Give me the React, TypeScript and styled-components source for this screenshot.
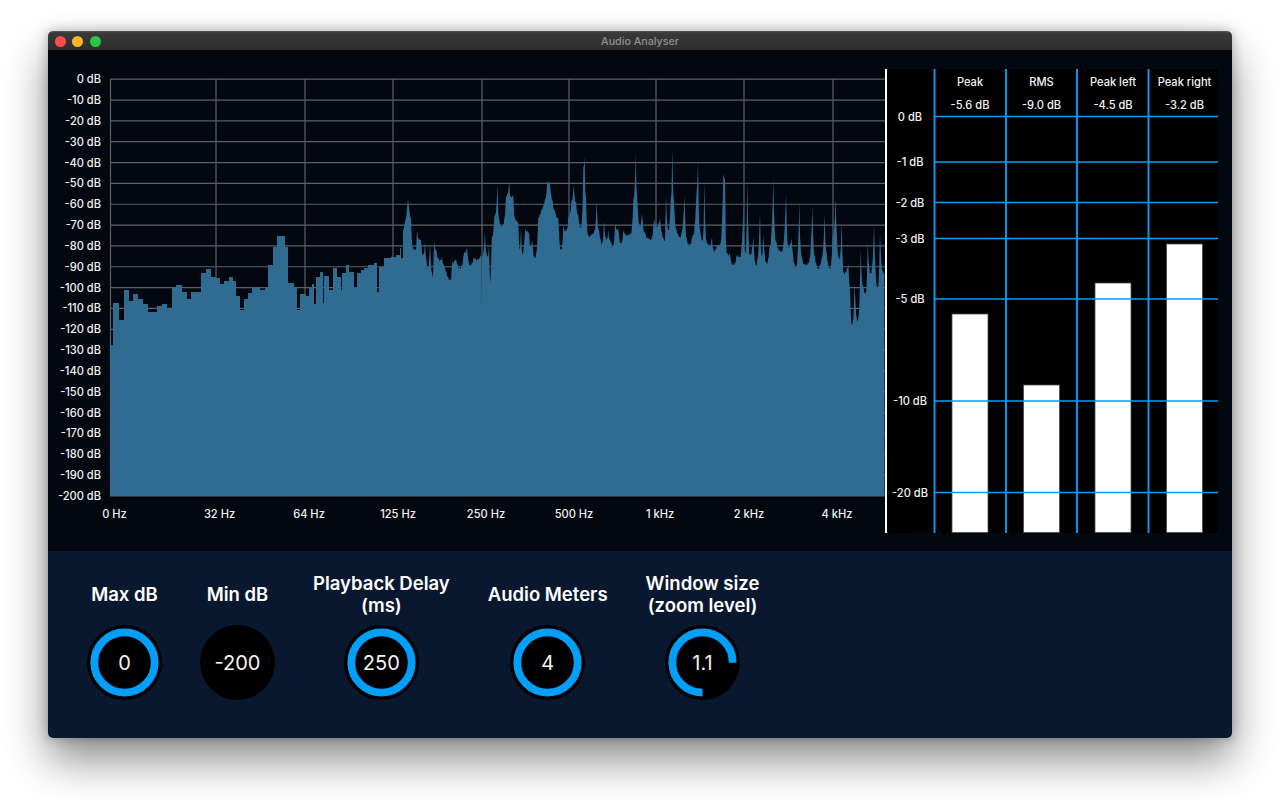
import React from "react";
import styled, { createGlobalStyle } from "styled-components";

const BLUE = "#009ffa";
const GRID = "#5d6068";

const DB_LABELS = Array.from({ length: 21 }, (_, i) => i * -10);
const FREQ_LINES = [110.5, 216, 305, 393, 482, 569, 656, 744, 833];
const FREQ_LABELS = [
  { text: "0 Hz", x: 114.5 },
  { text: "32 Hz", x: 219.5 },
  { text: "64 Hz", x: 309 },
  { text: "125 Hz", x: 398 },
  { text: "250 Hz", x: 486 },
  { text: "500 Hz", x: 574 },
  { text: "1 kHz", x: 660 },
  { text: "2 kHz", x: 749 },
  { text: "4 kHz", x: 837 },
];

// low end of the spectrum is blocky: [x where the step ends, y]
const LOW_STEPS: number[][] = [
  [113, 345], [119, 303], [124, 320], [129, 290], [133, 301], [138, 294], [143, 299],
  [148, 304], [157, 312], [162, 306], [167, 304], [172, 308], [176, 288], [182, 285],
  [187, 292], [191, 299], [201, 292], [206, 273], [211, 269], [216, 277], [220, 278],
  [224, 284], [229, 281], [233, 277], [236, 281], [240, 296], [244, 310], [248, 299],
  [252, 293], [256, 287], [260, 288], [265, 290], [268, 287], [273, 265], [277, 247],
  [285, 236], [288, 247], [294, 283], [297, 287], [300, 310], [306, 294], [309, 296],
  [312, 288], [314, 284], [316, 304], [320, 277], [323, 272], [324, 303], [329, 276],
  [333, 290], [337, 268], [341, 277], [342, 290], [346, 273], [349, 265], [354, 272],
  [357, 287], [361, 273], [364, 270], [368, 268], [374, 265], [377, 263], [379, 292],
  [384, 267], [391, 258], [396, 257], [400, 255], [401, 248], [403, 258],
];

// around 125 Hz to 250 Hz, [x, y] in page pixels
const MID_POINTS: number[][] = [
  [403, 230], [405, 222], [407, 208], [408, 199], [409, 207], [411, 217], [413, 248],
  [416, 250], [417, 230], [419, 240], [421, 240], [423, 255], [425, 242], [428, 267],
  [430, 243], [433, 277], [434, 242], [436, 250], [440, 260], [442, 257], [445, 267],
  [451, 280], [452, 263], [456, 258], [460, 268], [464, 253], [467, 248], [470, 265],
  [474, 257], [478, 260],
];

// from 250 Hz up, traced from a 3x crop that starts at (480, 140)
const HIGH_TRACE: number[][] = [
  [0, 350], [4, 350], [5, 525], [6, 350], [15, 275], [22, 350], [27, 310], [30, 430],
  [35, 295], [43, 230], [50, 185], [53, 135], [57, 235], [65, 260], [75, 225], [78, 170],
  [88, 125], [92, 170], [100, 170], [105, 235], [115, 245], [118, 330], [123, 260],
  [127, 340], [135, 270], [147, 275], [152, 320], [157, 300], [165, 355], [175, 230],
  [185, 205], [195, 175], [202, 125], [210, 130], [218, 180], [225, 215], [235, 235],
  [243, 330], [250, 255], [258, 275], [265, 230], [275, 180], [281, 135], [288, 185],
  [295, 225], [303, 265], [310, 80], [314, 50], [318, 175], [325, 290], [335, 285],
  [343, 270], [350, 185], [358, 275], [366, 310], [372, 240], [380, 300], [385, 270],
  [392, 305], [400, 320], [405, 255], [415, 270], [423, 310], [430, 270], [440, 285],
  [452, 280], [460, 180], [467, 40], [472, 175], [480, 260], [486, 220], [495, 280],
  [505, 295], [512, 300], [522, 235], [530, 260], [540, 235], [555, 300], [558, 165],
  [565, 270], [572, 180], [577, 25], [582, 190], [590, 270], [600, 290], [614, 165],
  [620, 295], [628, 315], [637, 290], [650, 150], [654, 60], [660, 270], [668, 300],
  [673, 125], [680, 305], [690, 315], [696, 290], [702, 335], [710, 315], [720, 315],
  [730, 100], [735, 115], [740, 340], [750, 345], [760, 375], [770, 345], [780, 350],
  [790, 190], [796, 340], [802, 120], [810, 345], [820, 290], [828, 375], [840, 220],
  [845, 350], [850, 285], [860, 370], [868, 325], [880, 110], [888, 305], [905, 335],
  [918, 160], [925, 320], [935, 295], [948, 380], [958, 185], [965, 350], [975, 375],
  [985, 370], [997, 200], [1005, 350], [1015, 385], [1025, 350], [1034, 220], [1040, 340],
  [1050, 385], [1058, 290], [1067, 170], [1078, 360], [1085, 245], [1092, 400],
  [1105, 370], [1110, 445], [1116, 555], [1124, 425], [1133, 545], [1142, 330],
  [1150, 440], [1157, 460], [1163, 305], [1172, 400], [1182, 255], [1193, 445],
  [1200, 280], [1210, 400], [1213, 400],
];

// thin spikes over a jagged floor, the trace only gives the peaks and valleys
const sampleSegment = (a: number[], b: number[]) => {
  const out: string[] = [];
  const steps = Math.max(1, Math.round((b[0] - a[0]) / 0.7));
  for (let i = 1; i <= steps; i++) {
    const t = i / steps;
    const x = a[0] + (b[0] - a[0]) * t;
    const y =
      b[1] < a[1]
        ? a[1] + (b[1] - a[1]) * t ** 2.4
        : b[1] + (a[1] - b[1]) * (1 - t) ** 2.4;
    const jitter = i === steps ? 0 : Math.sin(x * 12.9898) * 1.6;
    out.push(`L${x.toFixed(1)} ${(y + jitter).toFixed(1)}`);
  }
  return out.join(" ");
};

const buildSpectrumPath = () => {
  let d = "M110.5 496 L110.5 345";
  let prevX = 110.5;
  LOW_STEPS.forEach(([x, y]) => {
    d += ` L${prevX} ${y} L${x} ${y}`;
    prevX = x;
  });
  const points = [
    ...MID_POINTS,
    ...HIGH_TRACE.map(([px, py]) => [480 + px / 3, 140 + py / 3]),
  ];
  d += ` L${points[0][0]} ${points[0][1]}`;
  for (let i = 1; i < points.length; i++) {
    d += ` ${sampleSegment(points[i - 1], points[i])}`;
  }
  return `${d} L884.5 496 Z`;
};

const METER_LINES_X = [934.5, 1006, 1077, 1148.5];
const METER_SCALE = [
  { text: "0 dB", y: 116.5 },
  { text: "-1 dB", y: 162 },
  { text: "-2 dB", y: 202.5 },
  { text: "-3 dB", y: 238.5 },
  { text: "-5 dB", y: 299 },
  { text: "-10 dB", y: 401 },
  { text: "-20 dB", y: 492.5 },
];
const METERS = [
  { name: "Peak", value: "-5.6 dB", center: 970, top: 314 },
  { name: "RMS", value: "-9.0 dB", center: 1041.5, top: 385 },
  { name: "Peak left", value: "-4.5 dB", center: 1113, top: 283 },
  { name: "Peak right", value: "-3.2 dB", center: 1184.5, top: 244 },
];

const KNOBS = [
  { label: ["Max dB"], value: "0", sweep: 360 },
  { label: ["Min dB"], value: "-200", sweep: 0 },
  { label: ["Playback Delay", "(ms)"], value: "250", sweep: 360 },
  { label: ["Audio Meters"], value: "4", sweep: 360 },
  { label: ["Window size", "(zoom level)"], value: "1.1", sweep: 270 },
];

const KnobDial = ({ value, sweep }: { value: string; sweep: number }) => {
  const radius = 30.2;
  const circumference = 2 * Math.PI * radius;
  return (
    <Dial>
      <DialSvg viewBox="0 0 75 75">
        <circle cx="37.5" cy="37.5" r="37.5" fill="#000" />
        {sweep > 0 && (
          <circle
            cx="37.5"
            cy="37.5"
            r={radius}
            fill="none"
            stroke={BLUE}
            strokeWidth="7.8"
            strokeDasharray={`${(circumference * sweep) / 360} ${circumference}`}
            transform="rotate(90 37.5 37.5)"
          />
        )}
      </DialSvg>
      <DialValue>{value}</DialValue>
    </Dial>
  );
};

const App = () => {
  return (
    <>
      <GlobalStyle />
      <Page>
        <Window>
          <TitleBar>
            <Lights>
              <Light $color="#fc4c48" />
              <Light $color="#fdb42a" />
              <Light $color="#28c73f" />
            </Lights>
            <WindowTitle>Audio Analyser</WindowTitle>
          </TitleBar>
          <Analyser>
            <SpectrumSvg viewBox="48 69 837 464">
              {DB_LABELS.map((db, i) => {
                const y = 79.2 + i * 20.84;
                return (
                  <g key={db}>
                    <line x1="110" x2="885" y1={y} y2={y} stroke={GRID} strokeWidth="1.2" />
                    <AxisText x="101" y={y} textAnchor="end" dominantBaseline="central">
                      {db} dB
                    </AxisText>
                  </g>
                );
              })}
              {FREQ_LINES.map((x) => (
                <line key={x} x1={x} x2={x} y1="79" y2="496" stroke={GRID} strokeWidth="1.2" />
              ))}
              <path d={buildSpectrumPath()} fill="#306b92" />
              {FREQ_LABELS.map((f) => (
                <AxisText key={f.text} x={f.x} y="514" textAnchor="middle" dominantBaseline="central">
                  {f.text}
                </AxisText>
              ))}
            </SpectrumSvg>
            <MeterPanel>
              <MeterSvg viewBox="887 69 331 464">
                {METERS.map((m) => (
                  <g key={m.name}>
                    <rect x={m.center - 18} y={m.top} width="36" height={533 - m.top - 0.5} fill="#fff" stroke="#4a4a4a" strokeWidth="0.8" />
                    <AxisText x={m.center} y="81.8" textAnchor="middle" dominantBaseline="central">
                      {m.name}
                    </AxisText>
                    <AxisText x={m.center} y="104.5" textAnchor="middle" dominantBaseline="central">
                      {m.value}
                    </AxisText>
                  </g>
                ))}
                {METER_SCALE.map((s) => (
                  <g key={s.text}>
                    <line x1="934" x2="1218" y1={s.y} y2={s.y} stroke={BLUE} strokeWidth="1.5" />
                    <AxisText x="910" y={s.y} textAnchor="middle" dominantBaseline="central">
                      {s.text}
                    </AxisText>
                  </g>
                ))}
                {METER_LINES_X.map((x) => (
                  <line key={x} x1={x} x2={x} y1="69" y2="533" stroke={BLUE} strokeWidth="1.9" />
                ))}
              </MeterSvg>
            </MeterPanel>
          </Analyser>
          <Controls>
            {KNOBS.map((knob) => (
              <Knob key={knob.label[0]}>
                <KnobLabel>
                  {knob.label.map((line) => (
                    <span key={line}>{line}</span>
                  ))}
                </KnobLabel>
                <KnobDial value={knob.value} sweep={knob.sweep} />
              </Knob>
            ))}
          </Controls>
        </Window>
      </Page>
    </>
  );
};

const GlobalStyle = createGlobalStyle`
  html, body {
    margin: 0;
    padding: 0;
    background: #fff;
    font-family: Inter, "Liberation Sans", sans-serif;
  }
`;

const Page = styled.div`
  width: 1280px;
  height: 800px;
  padding: 31px 48px 0;
  box-sizing: border-box;
  overflow: hidden;
`;

const Window = styled.div`
  width: 1184px;
  height: 707px;
  display: flex;
  flex-direction: column;
  border-radius: 5px;
  overflow: hidden;
  box-shadow: 0 22px 44px rgba(0, 0, 0, 0.45), 0 0 12px rgba(0, 0, 0, 0.28);
`;

const TitleBar = styled.div`
  position: relative;
  height: 19px;
  flex: none;
  display: flex;
  align-items: center;
  justify-content: center;
  padding-top: 2px;
  box-sizing: border-box;
  background: linear-gradient(#5a5a5a, #393939 10%, #2d2d2d);
`;

const Lights = styled.div`
  position: absolute;
  left: 7px;
  top: 5px;
  display: flex;
  gap: 6.4px;
`;

const Light = styled.span<{ $color: string }>`
  width: 11px;
  height: 11px;
  border-radius: 50%;
  background: ${({ $color }) => $color};
`;

const WindowTitle = styled.span`
  font-size: 10.7px;
  color: #8f8f8f;
  font-weight: 500;
`;

const Analyser = styled.div`
  height: 501px;
  flex: none;
  display: flex;
  align-items: flex-start;
  padding-top: 19px;
  box-sizing: border-box;
  background: #03070f;
`;

const SpectrumSvg = styled.svg`
  width: 837px;
  height: 464px;
  display: block;
  flex: none;
`;

const AxisText = styled.text`
  font-family: Inter, "Liberation Sans", sans-serif;
  font-size: 11.1px;
  font-weight: 500;
  fill: #f2f2f2;
`;

const MeterPanel = styled.div`
  width: 331px;
  height: 464px;
  flex: none;
  border-left: 2px solid #fff;
  background: #000;
`;

const MeterSvg = styled.svg`
  width: 331px;
  height: 464px;
  display: block;
`;

const Controls = styled.div`
  flex: 1;
  display: flex;
  align-items: flex-start;
  gap: 38px;
  padding: 21px 0 0 39px;
  background: #0a182f;
`;

const Knob = styled.div`
  display: flex;
  flex-direction: column;
  align-items: center;
  gap: 9px;
`;

const KnobLabel = styled.div`
  height: 44px;
  display: flex;
  flex-direction: column;
  justify-content: center;
  align-items: center;
  font-size: 18.5px;
  line-height: 22px;
  font-weight: 600;
  color: #fff;
  white-space: nowrap;
`;

const Dial = styled.div`
  position: relative;
  width: 75px;
  height: 75px;
`;

const DialSvg = styled.svg`
  width: 75px;
  height: 75px;
  display: block;
`;

const DialValue = styled.span`
  position: absolute;
  inset: 0;
  display: flex;
  align-items: center;
  justify-content: center;
  font-size: 20px;
  color: #f4f4f4;
`;

export default App;
